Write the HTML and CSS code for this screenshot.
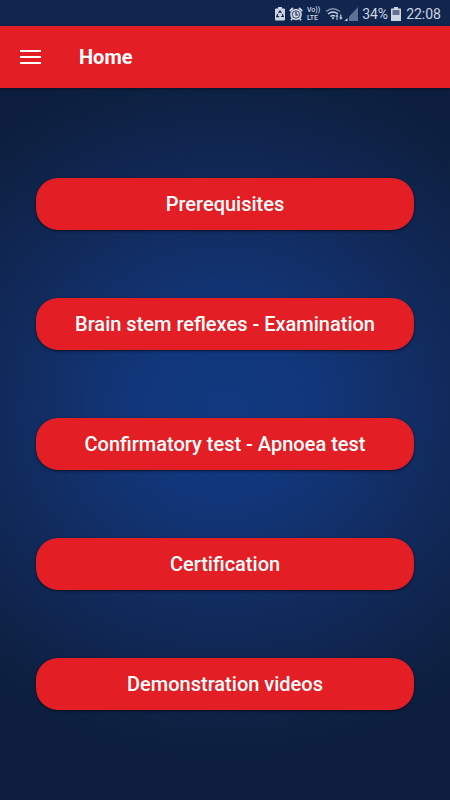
FILE: index.html
```html
<!DOCTYPE html>
<html lang="en">
<head>
<meta charset="utf-8">
<meta name="viewport" content="width=device-width, initial-scale=1">
<title>Home</title>
<link rel="stylesheet" href="styles.css">
</head>
<body>
<div class="status">
  <svg class="icon" width="10" height="14" viewBox="0 0 10 14" aria-hidden="true"><path fill="currentColor" d="M3 0h4v1.500h2q1 0 1 1v10q0 1-1 1H1q-1 0-1-1v-10q0-1 1-1h2z"/><path d="M3.500 5.800 5 4l1.500 1.800M7.300 7l1 2.500H6M4.200 9.700H1.800L2.700 7" fill="none" stroke="#10264f" stroke-width="1.200"/></svg>
  <svg class="icon alarm" width="14" height="14" viewBox="0 0 14 14" aria-hidden="true"><circle cx="7" cy="7.500" r="5.800" fill="currentColor"/><path d="M.7 4 4 1M13.300 4 10 1M3.500 11.300 2 13.200M10.500 11.300l1.500 1.900" fill="none" stroke="currentColor" stroke-width="1.700"/><circle cx="7" cy="7.500" r="3.700" fill="none" stroke="#10264f" stroke-width=".8"/><path d="M7 5v3h2.300" fill="none" stroke="#10264f" stroke-width="1.200"/></svg>
  <span class="volte"><span>Vo))</span><span>LTE</span></span>
  <svg class="icon wifi" width="19" height="14" viewBox="0 0 19 14" aria-hidden="true"><g fill="none" stroke="currentColor" stroke-width="1.400"><path opacity=".6" d="M1 4.500q7-5.500 14 0"/><path d="M3 7q5-4 10 0M5.500 9.500q2.500-2 4.500-.3"/></g><path fill="currentColor" d="M6.500 11 8 10l1.300 1L8 12.500zM10.200 9.500h1.300V13h1V9.500h1.200L12 7.500zM14 10.500h1.200V7.500h1.200v3h1.300L15.800 12.700z"/></svg>
  <svg class="icon" width="14" height="14" viewBox="0 0 14 14" aria-hidden="true"><path fill="#5c7194" d="M14 0v14H1z"/><path fill="#10264f" d="M0 9h5v5H0z"/><path fill="currentColor" d="M3.500 11v3H.5z"/></svg>
  <span class="percent">34%</span>
  <svg class="icon battery" width="10" height="14" viewBox="0 0 10 14" aria-hidden="true"><path fill="currentColor" d="M3 0h4v1.500h3V14H0V1.500h3z"/><path fill="#62738f" d="M1.500 3h7v5h-7z"/></svg>
  <span class="time">22:08</span>
</div>
<header class="bar">
  <button class="menu" type="button" aria-label="Menu"><svg width="21" height="16" viewBox="0 0 21 16" aria-hidden="true"><path fill="currentColor" d="M0 1h21v2H0zM0 7h21v2H0zM0 13h21v2H0z"/></svg></button>
  <h1>Home</h1>
</header>
<main class="home">
  <button type="button">Prerequisites</button>
  <button type="button">Brain stem reflexes - Examination</button>
  <button type="button">Confirmatory test - Apnoea test</button>
  <button type="button">Certification</button>
  <button type="button">Demonstration videos</button>
</main>
</body>
</html>
```
FILE: styles.css
```css
* {
  box-sizing: border-box;
}

body {
  margin: 0;
  min-height: 100vh;
  display: flex;
  flex-direction: column;
  background: #0d1f40;
  color: #fff;
  font-family: Roboto, "Liberation Sans", sans-serif;
}

.status {
  height: 26px;
  padding: 2px 9px 0 0;
  display: flex;
  align-items: center;
  justify-content: flex-end;
  background: #10264f;
  color: #cdd5e2;
  font-size: 14px;
  line-height: 16px;
}

.icon {
  flex: none;
}

.alarm {
  margin-left: 4px;
}

.volte {
  display: flex;
  flex-direction: column;
  margin: 0 5px 0 4px;
  font-size: 7px;
  line-height: 8px;
  font-weight: 500;
}

.percent {
  margin-left: 4px;
}

.battery {
  margin: 0 5px 0 3px;
}

.bar {
  height: 62px;
  padding: 0 20px;
  display: flex;
  align-items: center;
  gap: 38px;
  background: #e31e25;
  box-shadow: 0 1px 3px rgba(0, 0, 0, 0.4);
  z-index: 1;
}

.menu {
  display: flex;
  padding: 0;
  border: 0;
  background: none;
  color: #fff;
}

h1 {
  margin: 0;
  font-size: 20px;
  line-height: 24px;
  font-weight: 700;
}

.home {
  flex: 1;
  padding: 90px 36px;
  display: flex;
  flex-direction: column;
  gap: 68px;
  background: radial-gradient(ellipse 84% 50% at 50% 45%, #123a80, #12367a 25%, #112a5b 60%, #0e2143 90%, #0d1e3e);
}

.home button {
  height: 52px;
  padding: 0 16px;
  border: 0;
  border-radius: 22px;
  background: #e31e25;
  color: #fff;
  box-shadow: 0 1px 3px rgba(0, 0, 0, 0.6);
  font-family: inherit;
  font-size: 20px;
  line-height: 24px;
  font-weight: 500;
}
```
